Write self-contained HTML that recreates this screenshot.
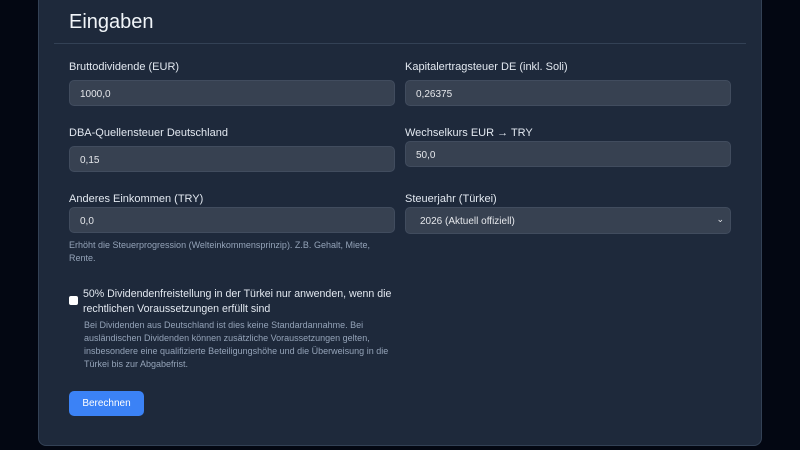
<!DOCTYPE html>
<html><head><meta charset="utf-8"><style>
*{box-sizing:border-box;margin:0;padding:0}
body{width:800px;height:450px;background:#030712;font-family:"Liberation Sans",sans-serif;position:relative;overflow:hidden;color:#e5e7eb}
.panel{position:absolute;left:38px;top:-20px;width:724px;height:466px;background:#1e293b;border:1px solid #334155;border-radius:8px}
.abs{position:absolute}
h1{position:absolute;left:69px;top:11px;font-size:20px;font-weight:normal;color:#f1f5f9}
.hr{position:absolute;left:54px;top:43px;width:692px;height:1px;background:#334155}
.lbl{position:absolute;font-size:11px;color:#e2e8f0}
.inp{position:absolute;width:326px;height:26px;background:#374151;border:1px solid #414c5e;border-radius:5px;font-size:10px;color:#e5e7eb;padding:8px 0 0 10px}
.help{position:absolute;font-size:9px;color:#94a3b8;line-height:13px}
</style></head><body>
<div class="panel"></div>
<h1>Eingaben</h1>
<div class="hr"></div>
<div class="lbl" style="left:69px;top:61px">Bruttodividende (EUR)</div>
<div class="inp" style="left:69px;top:80px">1000,0</div>
<div class="lbl" style="left:405px;top:61px">Kapitalertragsteuer DE (inkl. Soli)</div>
<div class="inp" style="left:405px;top:80px">0,26375</div>
<div class="lbl" style="left:69px;top:127px">DBA-Quellensteuer Deutschland</div>
<div class="inp" style="left:69px;top:146px">0,15</div>
<div class="lbl" style="left:405px;top:127px">Wechselkurs EUR → TRY</div>
<div class="inp" style="left:405px;top:141px">50,0</div>
<div class="lbl" style="left:69px;top:193px">Anderes Einkommen (TRY)</div>
<div class="inp" style="left:69px;top:207px">0,0</div>
<div class="lbl" style="left:405px;top:193px">Steuerjahr (Türkei)</div>
<div class="inp" style="left:405px;top:207px;height:27px;padding-left:14px">2026 (Aktuell offiziell)<span style="position:absolute;right:6px;top:6px;font-size:9px">⌄</span></div>
<div class="help" style="left:69px;top:239px;width:320px">Erhöht die Steuerprogression (Welteinkommensprinzip). Z.B. Gehalt, Miete, Rente.</div>
<div class="abs" style="left:69px;top:296px;width:9px;height:9px;background:#fff;border-radius:2px"></div>
<div class="lbl" style="left:83px;top:287px;line-height:15px;width:320px;font-size:10.6px">50% Dividendenfreistellung in der Türkei nur anwenden, wenn die rechtlichen Voraussetzungen erfüllt sind</div>
<div class="help" style="left:84px;top:319px;width:320px">Bei Dividenden aus Deutschland ist dies keine Standardannahme. Bei ausländischen Dividenden können zusätzliche Voraussetzungen gelten, insbesondere eine qualifizierte Beteiligungshöhe und die Überweisung in die Türkei bis zur Abgabefrist.</div>
<div class="abs" style="left:69px;top:391px;width:75px;height:25px;background:#3b82f6;border-radius:5px;color:#fff;font-size:10px;text-align:center;line-height:25px">Berechnen</div>
</body></html>
